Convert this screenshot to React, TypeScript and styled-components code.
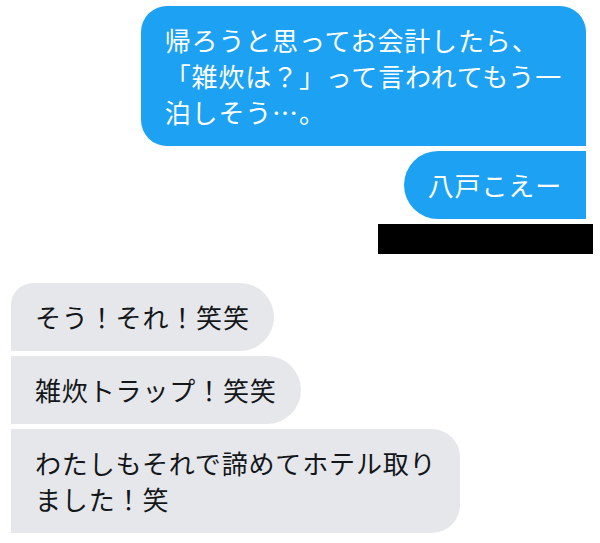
import React from 'react';
import styled, { createGlobalStyle } from 'styled-components';

const GlobalStyle = createGlobalStyle`
  html, body {
    margin: 0;
    padding: 0;
    background: #ffffff;
  }
  body {
    font-family: "Noto Sans CJK JP", "Noto Sans", sans-serif;
  }
`;

const Thread = styled.div`
  width: 600px;
  height: 543px;
  padding-top: 6px;
  box-sizing: border-box;
  display: flex;
  flex-direction: column;
  overflow: hidden;
`;

const Group = styled.div<{ $mine?: boolean }>`
  display: flex;
  flex-direction: column;
  align-items: ${(p) => (p.$mine ? 'flex-end' : 'flex-start')};
  gap: 5px;
  padding: ${(p) => (p.$mine ? '0 14px 0 0' : '0 0 0 11px')};
`;

const Bubble = styled.div<{ $mine?: boolean; $radius: string }>`
  padding: 16px 24px 16px 24px;
  font-size: 26px;
  letter-spacing: 0.85px;
  line-height: 36px;
  white-space: nowrap;
  border-radius: ${(p) => p.$radius};
  background-color: ${(p) => (p.$mine ? '#1da1f2' : '#e6e7ea')};
  color: ${(p) => (p.$mine ? '#ffffff' : '#14171a')};
`;

const Redacted = styled.div`
  width: 215px;
  height: 30px;
  margin-right: -7px;
  background-color: #000000;
`;

const Spacer = styled.div`
  height: 29px;
`;

const App = () => {
  return (
    <>
      <GlobalStyle />
      <Thread>
        <Group $mine>
          <Bubble $mine $radius="26px 26px 0 26px">
            帰ろうと思ってお会計したら、
            <br />
            「雑炊は？」って言われてもう一
            <br />
            泊しそう…。
          </Bubble>
          <Bubble $mine $radius="34px 0 0 34px">
            八戸こえー
          </Bubble>
          <Redacted />
        </Group>
        <Spacer />
        <Group>
          <Bubble $radius="22px 34px 34px 0">そう！それ！笑笑</Bubble>
          <Bubble $radius="0 34px 34px 0">雑炊トラップ！笑笑</Bubble>
          <Bubble $radius="0 28px 28px 0">
            わたしもそれで諦めてホテル取り
            <br />
            ました！笑
          </Bubble>
        </Group>
      </Thread>
    </>
  );
};

export default App;
